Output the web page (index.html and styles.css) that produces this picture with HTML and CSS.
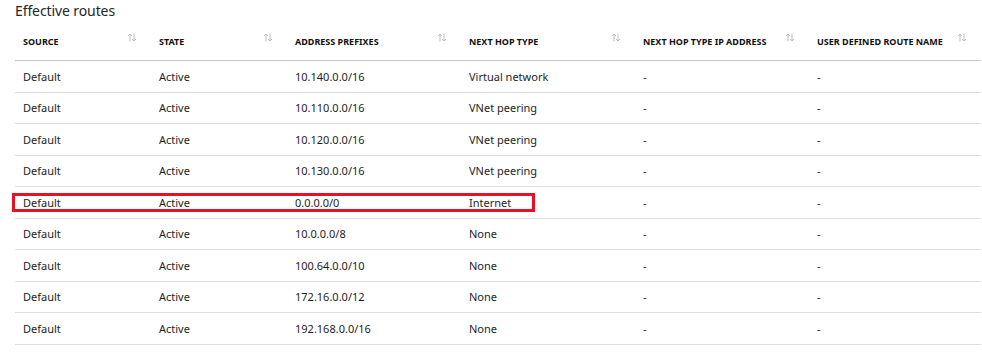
FILE: index.html
```html
<!DOCTYPE html>
<html lang="en">
<head>
    <meta charset="UTF-8">
    <title>Effective routes</title>
    <link rel="stylesheet" href="styles.css">
</head>
<body>
    <h2 class="title">Effective routes</h2>
    <table class="routes">
        <colgroup>
            <col class="col-s"><col class="col-s"><col class="col-l"><col class="col-l"><col class="col-l"><col>
        </colgroup>
        <thead>
            <tr>
                <th><span>Source</span><svg class="sort" viewBox="0 0 10 9"><path d="M3 8.5V1M1 3l2-2 2 2M7 0.5V8M5 6l2 2 2-2"/></svg></th>
                <th><span>State</span><svg class="sort" viewBox="0 0 10 9"><path d="M3 8.5V1M1 3l2-2 2 2M7 0.5V8M5 6l2 2 2-2"/></svg></th>
                <th><span>Address prefixes</span><svg class="sort" viewBox="0 0 10 9"><path d="M3 8.5V1M1 3l2-2 2 2M7 0.5V8M5 6l2 2 2-2"/></svg></th>
                <th><span>Next hop type</span><svg class="sort" viewBox="0 0 10 9"><path d="M3 8.5V1M1 3l2-2 2 2M7 0.5V8M5 6l2 2 2-2"/></svg></th>
                <th><span>Next hop type IP address</span><svg class="sort" viewBox="0 0 10 9"><path d="M3 8.5V1M1 3l2-2 2 2M7 0.5V8M5 6l2 2 2-2"/></svg></th>
                <th><span>User defined route name</span><svg class="sort" viewBox="0 0 10 9"><path d="M3 8.5V1M1 3l2-2 2 2M7 0.5V8M5 6l2 2 2-2"/></svg></th>
            </tr>
        </thead>
        <tbody>
            <tr><td>Default</td><td>Active</td><td>10.140.0.0/16</td><td>Virtual network</td><td>-</td><td>-</td></tr>
            <tr><td>Default</td><td>Active</td><td>10.110.0.0/16</td><td>VNet peering</td><td>-</td><td>-</td></tr>
            <tr><td>Default</td><td>Active</td><td>10.120.0.0/16</td><td>VNet peering</td><td>-</td><td>-</td></tr>
            <tr><td>Default</td><td>Active</td><td>10.130.0.0/16</td><td>VNet peering</td><td>-</td><td>-</td></tr>
            <tr class="highlight"><td>Default</td><td>Active</td><td>0.0.0.0/0</td><td>Internet</td><td>-</td><td>-</td></tr>
            <tr><td>Default</td><td>Active</td><td>10.0.0.0/8</td><td>None</td><td>-</td><td>-</td></tr>
            <tr><td>Default</td><td>Active</td><td>100.64.0.0/10</td><td>None</td><td>-</td><td>-</td></tr>
            <tr><td>Default</td><td>Active</td><td>172.16.0.0/12</td><td>None</td><td>-</td><td>-</td></tr>
            <tr><td>Default</td><td>Active</td><td>192.168.0.0/16</td><td>None</td><td>-</td><td>-</td></tr>
        </tbody>
    </table>
</body>
</html>
```

FILE: styles.css
```css
body {
    margin: 0;
    padding: 0 1px 0 15px;
    font-family: 'Noto Sans', 'Open Sans', sans-serif;
    color: #222;
    background: #fff;
}
.title {
    margin: 0;
    padding-top: 1px;
    font-size: 14px;
    font-weight: 400;
    line-height: 20px;
    letter-spacing: -0.1px;
    color: #262626;
}
.routes {
    width: 966px;
    border-collapse: collapse;
    table-layout: fixed;
}
.col-s {
    width: 136px;
}
.col-l {
    width: 174px;
}
.routes th {
    height: 39px;
    padding: 0 14px 0 8px;
    border-bottom: 1px solid #c8c8c8;
    text-align: left;
    vertical-align: bottom;
}
.routes th span {
    display: inline-block;
    padding-bottom: 12px;
    font-size: 9px;
    font-weight: 700;
    text-transform: uppercase;
    color: #111;
}
.routes th .sort {
    float: right;
    width: 10px;
    height: 9px;
    margin-top: 5px;
    fill: none;
    stroke: #b4b4b4;
    stroke-width: 0.9;
}
.routes td {
    height: 30.5px;
    padding: 0 8px;
    border-bottom: 1px solid #dedede;
    font-size: 11px;
    color: #1e1e1e;
    white-space: nowrap;
}
.highlight td:first-child {
    position: relative;
}
.highlight td:first-child::after {
    content: "";
    position: absolute;
    left: -3px;
    top: 6px;
    width: 517px;
    height: 13px;
    border: 3px solid #e81123;
}
```
